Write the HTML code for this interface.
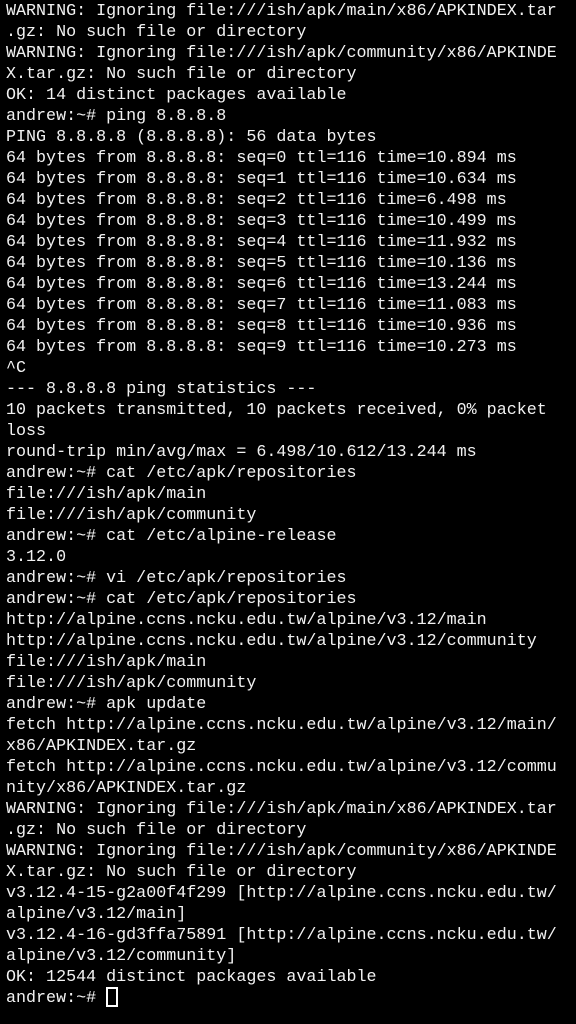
<!DOCTYPE html>
<html><head><meta charset="utf-8"><style>
html,body{margin:0;padding:0;background:#000;}
body{width:576px;height:1024px;overflow:hidden;position:relative;}
pre{margin:0;position:absolute;left:6px;top:1px;font-family:"Liberation Mono","DejaVu Sans Mono",monospace;font-size:16.7px;line-height:21px;color:#f2f2f2;white-space:pre;}
.cur{position:absolute;left:106px;top:987px;width:8px;height:16px;border:2px solid #fff;}
</style></head><body><pre>WARNING: Ignoring file:///ish/apk/main/x86/APKINDEX.tar
.gz: No such file or directory
WARNING: Ignoring file:///ish/apk/community/x86/APKINDE
X.tar.gz: No such file or directory
OK: 14 distinct packages available
andrew:~# ping 8.8.8.8
PING 8.8.8.8 (8.8.8.8): 56 data bytes
64 bytes from 8.8.8.8: seq=0 ttl=116 time=10.894 ms
64 bytes from 8.8.8.8: seq=1 ttl=116 time=10.634 ms
64 bytes from 8.8.8.8: seq=2 ttl=116 time=6.498 ms
64 bytes from 8.8.8.8: seq=3 ttl=116 time=10.499 ms
64 bytes from 8.8.8.8: seq=4 ttl=116 time=11.932 ms
64 bytes from 8.8.8.8: seq=5 ttl=116 time=10.136 ms
64 bytes from 8.8.8.8: seq=6 ttl=116 time=13.244 ms
64 bytes from 8.8.8.8: seq=7 ttl=116 time=11.083 ms
64 bytes from 8.8.8.8: seq=8 ttl=116 time=10.936 ms
64 bytes from 8.8.8.8: seq=9 ttl=116 time=10.273 ms
^C
--- 8.8.8.8 ping statistics ---
10 packets transmitted, 10 packets received, 0% packet
loss
round-trip min/avg/max = 6.498/10.612/13.244 ms
andrew:~# cat /etc/apk/repositories
file:///ish/apk/main
file:///ish/apk/community
andrew:~# cat /etc/alpine-release
3.12.0
andrew:~# vi /etc/apk/repositories
andrew:~# cat /etc/apk/repositories
http://alpine.ccns.ncku.edu.tw/alpine/v3.12/main
http://alpine.ccns.ncku.edu.tw/alpine/v3.12/community
file:///ish/apk/main
file:///ish/apk/community
andrew:~# apk update
fetch http://alpine.ccns.ncku.edu.tw/alpine/v3.12/main/
x86/APKINDEX.tar.gz
fetch http://alpine.ccns.ncku.edu.tw/alpine/v3.12/commu
nity/x86/APKINDEX.tar.gz
WARNING: Ignoring file:///ish/apk/main/x86/APKINDEX.tar
.gz: No such file or directory
WARNING: Ignoring file:///ish/apk/community/x86/APKINDE
X.tar.gz: No such file or directory
v3.12.4-15-g2a00f4f299 [http://alpine.ccns.ncku.edu.tw/
alpine/v3.12/main]
v3.12.4-16-gd3ffa75891 [http://alpine.ccns.ncku.edu.tw/
alpine/v3.12/community]
OK: 12544 distinct packages available
andrew:~# </pre><div class="cur"></div></body></html>
